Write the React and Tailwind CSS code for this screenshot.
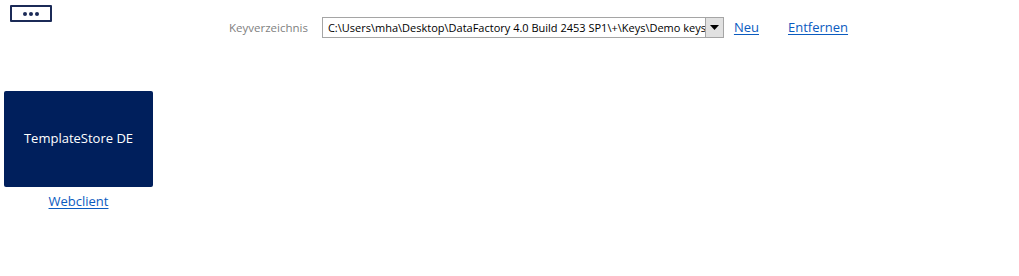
import React from "react";

export default function App() {
  const font = { fontFamily: '"Segoe UI", "Open Sans", "Noto Sans", sans-serif' };
  return (
    <div className="w-[1019px] h-[276px] bg-white" style={font}>
      <div className="flex items-start">
        <button className="ml-[10px] mt-[5px] w-[42px] h-[17px] border-2 border-[#1b2a57] rounded-[1px] flex items-center justify-center gap-[2px] bg-white">
          <span className="w-[4px] h-[4px] rounded-full bg-[#1b2a57]" />
          <span className="w-[4px] h-[4px] rounded-full bg-[#1b2a57]" />
          <span className="w-[4px] h-[4px] rounded-full bg-[#1b2a57]" />
        </button>
        <div className="ml-[177px] mt-[17px] flex items-center h-[21px]">
          <span className="text-[11.5px] text-[#7f7f7f]">Keyverzeichnis</span>
          <div className="ml-[14px] w-[402px] h-[21px] border border-[#a5a5a5] flex items-center bg-white">
            <div className="flex-1 overflow-hidden whitespace-nowrap pl-[5px] text-[11px] text-black leading-[19px]">
              C:\Users\mha\Desktop\DataFactory 4.0 Build 2453 SP1\+\Keys\Demo keys\
            </div>
            <div className="w-[18px] h-[19px] bg-[#e1e1e1] border-l border-[#a5a5a5] flex items-center justify-center">
              <svg width="9" height="5" viewBox="0 0 9 5"><path d="M0 0 H9 L4.5 5 Z" fill="#000" /></svg>
            </div>
          </div>
          <a href="#" className="ml-[10px] text-[13px] text-[#0b5bbf] underline underline-offset-2">Neu</a>
          <a href="#" className="ml-[29px] text-[13px] text-[#0b5bbf] underline underline-offset-2">Entfernen</a>
        </div>
      </div>
      <div className="mt-[53px] ml-[4px] w-[149px] flex flex-col items-center">
        <div className="w-[149px] h-[96px] bg-[#001f5c] rounded-[2px] flex items-center justify-center">
          <span className="text-[13px] text-white">TemplateStore DE</span>
        </div>
        <a href="#" className="mt-[5px] text-[13px] text-[#0b5bbf] underline underline-offset-2">Webclient</a>
      </div>
    </div>
  );
}
